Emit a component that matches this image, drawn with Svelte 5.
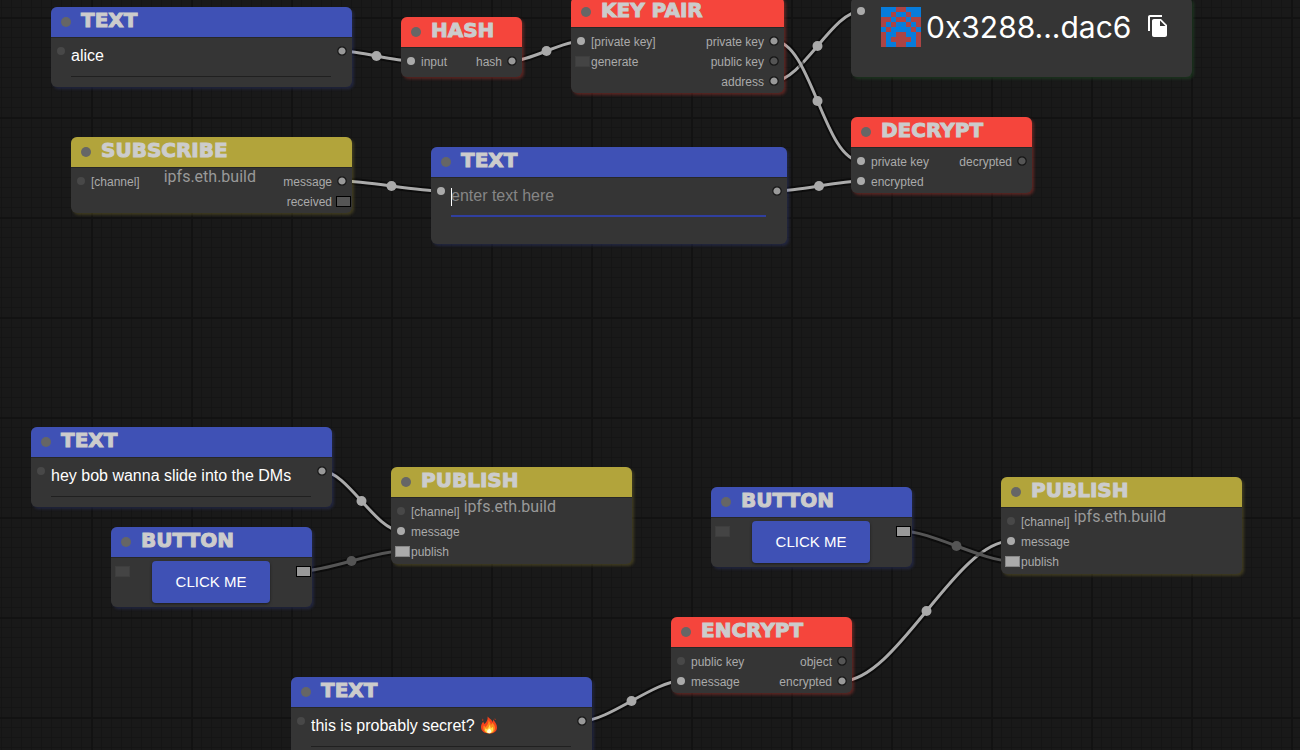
<script>
  const nodes = [
    { id: 'text1', kind: 'text', title: 'TEXT', tone: 'blue', x: 51, y: 7, w: 301, h: 80, value: 'alice', outputs: [{ on: true }] },
    { id: 'hash', title: 'HASH', tone: 'red', x: 401, y: 17, w: 121, h: 60, inputs: [{ label: 'input', on: true }], outputs: [{ label: 'hash', on: true }] },
    {
      id: 'keys', title: 'KEY PAIR', tone: 'red', x: 571, y: -3, w: 213, h: 96,
      inputs: [{ label: '[private key]', on: true }, { label: 'generate', square: true }],
      outputs: [{ label: 'private key', on: true }, { label: 'public key' }, { label: 'address', on: true }]
    },
    { id: 'address', kind: 'address', tone: 'green', x: 851, y: -3, w: 341, h: 80, value: '0x3288...dac6', inputs: [{ on: true }] },
    {
      id: 'decrypt', title: 'DECRYPT', tone: 'red', x: 851, y: 117, w: 181, h: 75,
      inputs: [{ label: 'private key', on: true }, { label: 'encrypted', on: true }],
      outputs: [{ label: 'decrypted' }]
    },
    {
      id: 'subscribe', title: 'SUBSCRIBE', tone: 'olive', x: 71, y: 137, w: 281, h: 76, channel: 'ipfs.eth.build', gap: 24,
      inputs: [{ label: '[channel]' }],
      outputs: [{ label: 'message', on: true }, { label: 'received', square: true }]
    },
    { id: 'text2', kind: 'text', title: 'TEXT', tone: 'blue', x: 431, y: 147, w: 356, h: 97, value: '', focused: true, inputs: [{ on: true }], outputs: [{ on: true }] },
    { id: 'text3', kind: 'text', title: 'TEXT', tone: 'blue', x: 31, y: 427, w: 301, h: 80, value: 'hey bob wanna slide into the DMs', outputs: [{ on: true }] },
    { id: 'button1', kind: 'button', title: 'BUTTON', tone: 'blue', x: 111, y: 527, w: 201, h: 80 },
    {
      id: 'publish1', title: 'PUBLISH', tone: 'olive', x: 391, y: 467, w: 241, h: 97, channel: 'ipfs.eth.build', gap: 4,
      inputs: [{ label: '[channel]' }, { label: 'message', on: true }, { label: 'publish', square: true, on: true }]
    },
    { id: 'button2', kind: 'button', title: 'BUTTON', tone: 'blue', x: 711, y: 487, w: 201, h: 80 },
    {
      id: 'publish2', title: 'PUBLISH', tone: 'olive', x: 1001, y: 477, w: 241, h: 97, channel: 'ipfs.eth.build', gap: 4,
      inputs: [{ label: '[channel]' }, { label: 'message', on: true }, { label: 'publish', square: true, on: true }]
    },
    {
      id: 'encrypt', title: 'ENCRYPT', tone: 'red', x: 671, y: 617, w: 181, h: 75,
      inputs: [{ label: 'public key' }, { label: 'message', on: true }],
      outputs: [{ label: 'object' }, { label: 'encrypted', on: true }]
    },
    { id: 'text4', kind: 'text', title: 'TEXT', tone: 'blue', x: 291, y: 677, w: 301, h: 80, value: 'this is probably secret?', flame: true, outputs: [{ on: true }] }
  ];

  const links = [
    ['text1', 0, 'hash', 0],
    ['hash', 0, 'keys', 0],
    ['keys', 2, 'address', 0],
    ['keys', 0, 'decrypt', 0],
    ['subscribe', 0, 'text2', 0],
    ['text2', 0, 'decrypt', 1],
    ['text3', 0, 'publish1', 1],
    ['button1', 0, 'publish1', 2, true],
    ['encrypt', 1, 'publish2', 1],
    ['button2', 0, 'publish2', 2, true],
    ['text4', 0, 'encrypt', 1]
  ].map(([from, out, to, inp, event]) => {
    const a = nodes.find((n) => n.id === from);
    const b = nodes.find((n) => n.id === to);
    const slotY = (n, i) => n.y + (n.title ? 30 : 0) + 14 + i * 20;
    const ax = a.x + a.w - 10;
    const ay = slotY(a, out);
    const bx = b.x + 10;
    const by = slotY(b, inp);
    const bend = Math.hypot(bx - ax, by - ay) * 0.25;
    return {
      d: `M${ax} ${ay}C${ax + bend} ${ay} ${bx - bend} ${by} ${bx} ${by}`,
      mx: (ax + bx) / 2,
      my: (ay + by) / 2,
      color: event ? '#555' : '#aaa'
    };
  });

  const identicon = ['00011000', '00100100', '11011011', '10100101', '01000010', '10011001', '10111101', '10011001'];
</script>

{#snippet pin(slot, output)}
  <svg class="pin" width="20" height="20" aria-hidden="true">
    {#if slot.square && output}
      <rect x="4.5" y="5.5" width="14" height="10" fill={slot.on ? '#999' : '#555'} stroke="#000" />
    {:else if slot.square}
      <rect x="4.5" y="5.5" width="14" height="10" fill={slot.on ? '#aaa' : '#444'} stroke={slot.on ? '#868686' : '#3e3e3e'} />
    {:else if output}
      <circle cx="10" cy="10" r="4.200" fill={slot.on ? '#999' : '#555'} stroke="#161616" stroke-width="1.200" />
    {:else}
      <circle cx="10" cy="10" r="4" fill={slot.on ? '#aaa' : '#484848'} />
    {/if}
  </svg>
{/snippet}

<main class="canvas">
  <svg class="links" aria-hidden="true">
    {#each links as l}
      <path d={l.d} stroke="#000" stroke-opacity="0.5" stroke-width="7" />
      <path d={l.d} stroke={l.color} stroke-width="3" />
      <circle cx={l.mx} cy={l.my} r="5" fill={l.color} />
    {/each}
  </svg>

  {#each nodes as n (n.id)}
    <section class="node {n.tone}" style="left:{n.x}px;top:{n.y}px;width:{n.w}px;min-height:{n.h}px">
      {#if n.title}
        <header><span class="dot"></span><h2>{n.title}</h2></header>
      {/if}
      <div class="body">
        <ul class="slots">
          {#each n.inputs ?? [{ square: n.kind === 'button' }] as s}
            <li>{@render pin(s, false)}{s.label ?? ''}</li>
          {/each}
        </ul>

        {#if n.kind === 'text'}
          <div class="field" class:focused={n.focused}>
            <input type="text" aria-label="Text" placeholder="enter text here" value={n.value} />
            {#if n.flame}
              <svg class="flame" width="18" height="18" viewBox="0 0 18 18" aria-hidden="true">
                <path fill="#f4431c" d="M7.500 .5C8.500 2 11.500 3 12.500 6C13 5.500 13.200 4.500 13 3.500C15 5.500 17 8.500 17 11.500C17 15.500 13.500 17.500 9.500 17.500C5 17.500 1 15.500 1 11C1 8.800 2 7 3.300 5.500C3.500 6.500 3.800 7.300 4.500 8C6 6.500 8.200 4 7.500 .5Z" />
                <path fill="#fd8a1f" d="M8.500 4C9.500 5.500 10.500 7 10.800 9C11.500 8.500 12 7.800 12.200 6.800C14 8.500 15 10 15 12C15 15.500 12.500 17.200 9.500 17.200C5.500 17.200 3.300 15 3.300 12C3.300 10.800 3.500 10 4 9.200C4.500 10.200 5 10.700 5.600 11C7.500 9 8.800 7 8.500 4Z" />
                <path fill="#ffdc4a" d="M9.300 8.500C10 10 10.600 11 10.800 12.200C11.500 12 12 11.500 12.300 10.800C13.200 12 13.500 13 13.200 14.200C12.700 16.300 11 17.300 9.200 17.300C6.500 17.300 5 15.700 5 13.800C5 13.200 5.100 12.700 5.400 12.200C6 12.800 6.500 13 7.200 13C8.500 11.800 9.400 10.500 9.300 8.500Z" />
                <path fill="#fffbe0" d="M9.300 12.500C10.300 13.500 11.300 14 11.300 15.300C11.300 16.500 10.300 17.200 9.200 17.200C8 17.200 7 16.500 7 15.300C7 14.200 8.500 13.800 9.300 12.500Z" />
                <path fill="#d93a17" d="M2.500 2.500L3.500 4L2.300 5.200ZM14.800 2L15.800 3.800L14.800 4Z" />
              </svg>
            {/if}
          </div>
        {:else if n.kind === 'button'}
          <button class="click" type="button">CLICK ME</button>
        {:else if n.kind === 'address'}
          <div class="address">
            <svg width="40" height="40" viewBox="0 0 8 8" shape-rendering="crispEdges" aria-hidden="true">
              <rect width="8" height="8" fill="#077cdb" />
              {#each identicon as row, y}
                {#each row as c, x}
                  {#if c === '1'}<rect {x} {y} width="1" height="1" fill="#ac4444" />{/if}
                {/each}
              {/each}
            </svg>
            <span>{n.value}</span>
            <button class="copy" type="button" aria-label="Copy">
              <svg width="24" height="24" viewBox="0 0 24 24" fill="#fff">
                <path d="M16 1H4c-1.100 0-2 .9-2 2v14h2V3h12V1zm-1 4l6 6v10c0 1.100-.9 2-2 2H7.990C6.890 23 6 22.100 6 21V7c0-1.100.89-2 1.990-2h7zm-1 7h5.500L14 6.500V12z" />
              </svg>
            </button>
          </div>
        {:else if n.channel}
          <input class="channel" type="text" aria-label="Channel" value={n.channel} style="margin-left:{n.gap}px" />
        {/if}

        <ul class="slots out">
          {#each n.outputs ?? (n.kind === 'button' ? [{ square: true, on: true }] : []) as s}
            <li>{s.label ?? ''}{@render pin(s, true)}</li>
          {/each}
        </ul>
      </div>
    </section>
  {/each}
</main>

<style>
  :global(body) {
    margin: 0;
    background: #191919;
  }
  .canvas {
    position: relative;
    min-height: 100vh;
    overflow: hidden;
    font-family: 'Liberation Sans', Arial, sans-serif;
    background-color: #191919;
    background-image:
      linear-gradient(90deg, #121212 2px, transparent 2px),
      linear-gradient(#121212 2px, transparent 2px),
      linear-gradient(90deg, #151515 1px, transparent 1px),
      linear-gradient(#151515 1px, transparent 1px);
    background-size: 100px 100px, 100px 100px, 10px 10px, 10px 10px;
    background-position: 91px 0, 0 17px, 1px 0, 0 7px;
  }
  .links {
    position: absolute;
    inset: 0;
    width: 100%;
    height: 100%;
    fill: none;
  }
  .node {
    position: absolute;
    display: flex;
    flex-direction: column;
    box-sizing: border-box;
    border-radius: 6px;
    background: #353535;
    box-shadow: 2px 2px 3px var(--glow);
  }
  .blue { --tone: #3f51b5; --glow: rgba(63, 81, 181, 0.25); }
  .red { --tone: #f5453c; --glow: rgba(245, 69, 60, 0.3); }
  .olive { --tone: #b2a43b; --glow: rgba(178, 164, 59, 0.25); }
  .green { --glow: rgba(46, 140, 60, 0.25); }
  header {
    display: flex;
    align-items: center;
    gap: 10px;
    height: 30px;
    padding-left: 10px;
    border-radius: 6px 6px 0 0;
    background: var(--tone);
  }
  .dot {
    width: 10px;
    height: 10px;
    border-radius: 50%;
    background: #666;
  }
  h2 {
    margin: 0;
    padding-bottom: 4px;
    color: #ccc;
    font: bold 20px/26px 'DejaVu Sans', sans-serif;
    white-space: nowrap;
    -webkit-text-stroke: 1px #ccc;
  }
  .body {
    display: flex;
    align-items: flex-start;
    flex: 1;
  }
  header + .body {
    box-shadow: inset 0 1px #272727;
  }
  .slots {
    margin: 0;
    padding: 4px 0 2px;
    list-style: none;
    color: #aaa;
    font-size: 12px;
    line-height: 22px;
    white-space: nowrap;
  }
  .slots li {
    display: flex;
    height: 20px;
  }
  .out {
    margin-left: auto;
  }
  .out li {
    justify-content: flex-end;
  }
  .pin {
    flex: none;
  }
  input {
    min-width: 0;
    padding: 0;
    border: 0;
    outline: 0;
    background: none;
    color: #fff;
    font: 16px/20px 'Liberation Sans', Arial, sans-serif;
  }
  input::placeholder {
    color: #868686;
    opacity: 1;
  }
  .field {
    position: relative;
    flex: 1;
    display: flex;
    height: 39px;
    margin-right: 1px;
    border-bottom: 1px solid #202020;
  }
  .field input {
    flex: 1;
    height: 20px;
    margin-top: 9px;
  }
  .focused {
    height: 38px;
    border-bottom: 2px solid #303f9f;
  }
  .focused::before {
    content: '';
    position: absolute;
    left: 0;
    top: 11px;
    width: 1px;
    height: 18px;
    background: #fff;
  }
  .flame {
    position: absolute;
    left: 169px;
    top: 9px;
  }
  .channel {
    width: 98px;
    height: 20px;
    color: #999;
    font-family: Roboto, sans-serif;
  }
  .click {
    width: 118px;
    height: 42px;
    margin: 4px 0 0 21px;
    padding: 0;
    border: 0;
    border-radius: 4px;
    background: #3f51b5;
    box-shadow: 0 1px 3px rgba(0, 0, 0, 0.5);
    color: #fff;
    font: 15px/26px 'Liberation Sans', Arial, sans-serif;
  }
  .address {
    display: flex;
    align-items: center;
    padding: 10px 0 0 10px;
    color: #fff;
    font: 30px/40px Inter, sans-serif;
  }
  .address span {
    padding: 0 15px 0 5px;
  }
  .copy {
    display: flex;
    padding: 0 0 2px;
    border: 0;
    background: none;
  }
</style>
